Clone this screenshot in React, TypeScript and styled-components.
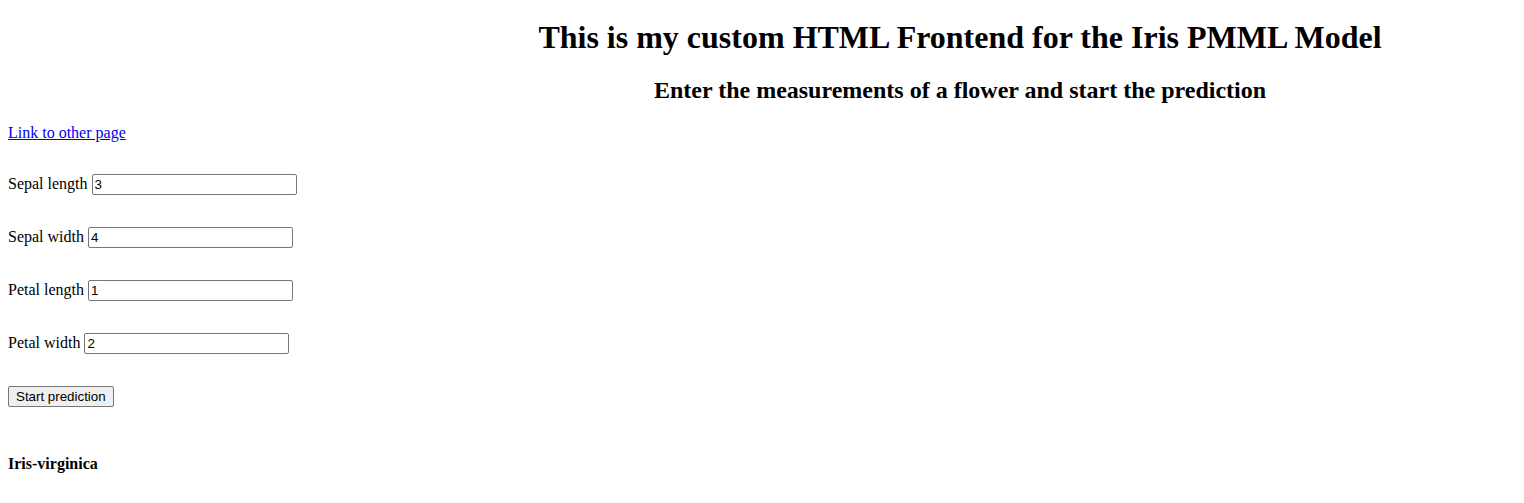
import React, { useState } from 'react'
import styled, { createGlobalStyle } from 'styled-components'

const GlobalStyle = createGlobalStyle`
    html, body {
        background: #ffffff;
    }
    body {
        margin: 8px;
        font-family: "Liberation Serif", "Times New Roman", serif;
        font-size: 16px;
        color: #000000;
    }
`

const Header = styled.header`
    padding-left: 396px;
    text-align: center;
`

const Title = styled.h1`
    font-size: 32px;
    font-weight: bold;
    margin: 10.5px 0 21.44px;
`

const Subtitle = styled.h2`
    font-size: 24px;
    font-weight: bold;
    margin: 19.92px 0;
`

const LinkLine = styled.p`
    margin: 16px 0 32px;
`

const OtherLink = styled.a`
    color: #0000ee;
    text-decoration: underline;
`

const Form = styled.form`
    display: flex;
    flex-direction: column;
    align-items: flex-start;
    gap: 32px;
`

const Row = styled.div`
    display: flex;
    align-items: baseline;
    gap: 4px;
    height: 21px;
`

const Field = styled.input`
    box-sizing: border-box;
    width: 205px;
    height: 21px;
    padding: 1px 2px;
    border: 1px solid #767676;
    border-radius: 2px;
    font-family: "Liberation Sans", Arial, sans-serif;
    font-size: 13.33px;
    color: #000000;
    background: #ffffff;
`

const Button = styled.button`
    box-sizing: border-box;
    height: 21px;
    padding: 1px 7px;
    border: 1px solid #767676;
    border-radius: 2px;
    background: #efefef;
    font-family: "Liberation Sans", Arial, sans-serif;
    font-size: 13.33px;
    color: #000000;
`

const Result = styled.p`
    margin: 48px 0 0;
    font-weight: bold;
`

const fields = [
    { key: 'sepalLength', label: 'Sepal length', value: '3' },
    { key: 'sepalWidth', label: 'Sepal width', value: '4' },
    { key: 'petalLength', label: 'Petal length', value: '1' },
    { key: 'petalWidth', label: 'Petal width', value: '2' },
]

const App: React.FC = () => {
    const [values, setValues] = useState<Record<string, string>>(
        Object.fromEntries(fields.map((f) => [f.key, f.value]))
    )

    return (
        <>
            <GlobalStyle />
            <Header>
                <Title>This is my custom HTML Frontend for the Iris PMML Model</Title>
                <Subtitle>Enter the measurements of a flower and start the prediction</Subtitle>
            </Header>
            <LinkLine>
                <OtherLink href="#">Link to other page</OtherLink>
            </LinkLine>
            <Form onSubmit={(e) => e.preventDefault()}>
                {fields.map((f) => (
                    <Row key={f.key}>
                        <label htmlFor={f.key}>{f.label}</label>
                        <Field
                            id={f.key}
                            value={values[f.key]}
                            onChange={(e) => setValues({ ...values, [f.key]: e.target.value })}
                        />
                    </Row>
                ))}
                <Button type="submit">Start prediction</Button>
            </Form>
            <Result>Iris-virginica</Result>
        </>
    )
}

export default App
